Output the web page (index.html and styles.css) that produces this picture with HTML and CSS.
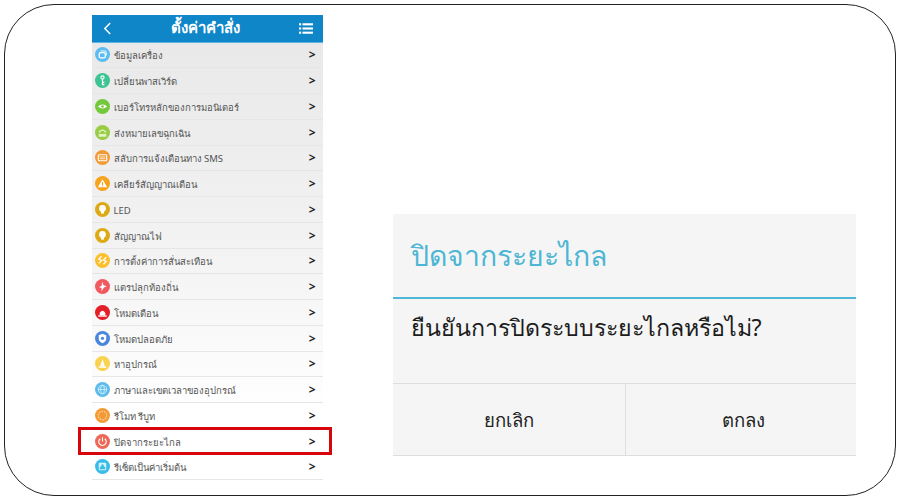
FILE: index.html
```html
<!DOCTYPE html>
<html lang="th">
  <head>
    <meta charset="utf-8" />
    <title>ปิดจากระยะไกล</title>
    <link rel="stylesheet" href="styles.css">
  </head>

  <body>
    <div class="slide">
      <div class="phone">
        <div class="topbar">
          <svg class="back" viewBox="0 0 10 14"><path d="M8 1 L2 7 L8 13" /></svg>
          <span class="topbar-title">ตั้งค่าคำสั่ง</span>
          <svg class="menu" viewBox="0 0 16 12">
            <rect x="0" y="0" width="2.5" height="2.4" /><rect x="4" y="0" width="12" height="2.4" />
            <rect x="0" y="4.8" width="2.5" height="2.4" /><rect x="4" y="4.8" width="12" height="2.4" />
            <rect x="0" y="9.6" width="2.5" height="2.4" /><rect x="4" y="9.6" width="12" height="2.4" />
          </svg>
        </div>

        <ul class="menu-list">
          <li class="row">
            <svg class="icon" viewBox="0 0 16 16"><circle cx="8" cy="8" r="8" fill="#5cbcf2" /><rect x="4.5" y="6" width="6.5" height="5.5" rx="1.5" fill="none" stroke="#fff" stroke-width="1.3" /><path d="M6 4.2 H10.5 Q12 4.2 12 6 V9" fill="none" stroke="#fff" stroke-width="1" /></svg>
            <span class="label">ข้อมูลเครื่อง</span><span class="arrow">&gt;</span>
          </li>
          <li class="row">
            <svg class="icon" viewBox="0 0 16 16"><circle cx="8" cy="8" r="8" fill="#3cc492" /><circle cx="8" cy="4.8" r="1.7" fill="none" stroke="#fff" stroke-width="1.2" /><path d="M8 6.5 V13 M8 10 H10 M8 12.4 H10" stroke="#fff" stroke-width="1.3" fill="none" /></svg>
            <span class="label">เปลี่ยนพาสเวิร์ด</span><span class="arrow">&gt;</span>
          </li>
          <li class="row">
            <svg class="icon" viewBox="0 0 16 16"><circle cx="8" cy="8" r="8" fill="#74c83c" /><path d="M3 8 Q8 3.5 13 8 Q8 12.5 3 8 Z" fill="#fff" /><circle cx="8" cy="8" r="1.4" fill="#74c83c" /></svg>
            <span class="label">เบอร์โทรหลักของการมอนิเตอร์</span><span class="arrow">&gt;</span>
          </li>
          <li class="row">
            <svg class="icon" viewBox="0 0 16 16"><circle cx="8" cy="8" r="8" fill="#98cc44" /><path d="M4 7 Q8 2.5 12 7 V8 H10 V6.5 H6 V8 H4 Z" fill="#e4f3c6" /><rect x="4" y="9.5" width="8" height="3" fill="#e4f3c6" /></svg>
            <span class="label">ส่งหมายเลขฉุกเฉิน</span><span class="arrow">&gt;</span>
          </li>
          <li class="row">
            <svg class="icon" viewBox="0 0 16 16"><circle cx="8" cy="8" r="8" fill="#f49a35" /><rect x="3.5" y="5" width="9" height="6.5" rx="1" fill="none" stroke="#fff" stroke-width="1.2" /><path d="M5 7.5 H11 M5 9.3 H11" stroke="#fff" stroke-width=".8" /></svg>
            <span class="label">สลับการแจ้งเตือนทาง SMS</span><span class="arrow">&gt;</span>
          </li>
          <li class="row">
            <svg class="icon" viewBox="0 0 16 16"><circle cx="8" cy="8" r="8" fill="#f7a31c" /><path d="M8 3.5 L13 12 H3 Z" fill="#fff" /><rect x="7.4" y="6.5" width="1.2" height="3" fill="#f7a31c" /><rect x="7.4" y="10" width="1.2" height="1.1" fill="#f7a31c" /></svg>
            <span class="label">เคลียร์สัญญาณเตือน</span><span class="arrow">&gt;</span>
          </li>
          <li class="row">
            <svg class="icon" viewBox="0 0 16 16"><circle cx="8" cy="8" r="8" fill="#dcaa14" /><circle cx="8" cy="6.8" r="3.6" fill="#fff" /><rect x="6.5" y="9.6" width="3" height="2.8" fill="#fff" /></svg>
            <span class="label">LED</span><span class="arrow">&gt;</span>
          </li>
          <li class="row">
            <svg class="icon" viewBox="0 0 16 16"><circle cx="8" cy="8" r="8" fill="#dcaa14" /><circle cx="8" cy="6.8" r="3.6" fill="#fff" /><rect x="6.5" y="9.6" width="3" height="2.8" fill="#fff" /></svg>
            <span class="label">สัญญาณไฟ</span><span class="arrow">&gt;</span>
          </li>
          <li class="row">
            <svg class="icon" viewBox="0 0 16 16"><circle cx="8" cy="8" r="8" fill="#fbc02d" /><path d="M7 3.5 L4 6.5 L7 8 L4 11 M12 4.5 L9 7.5 L12 9 L9 12" fill="none" stroke="#fff" stroke-width="1.3" /></svg>
            <span class="label">การตั้งค่าการสั่นสะเทือน</span><span class="arrow">&gt;</span>
          </li>
          <li class="row">
            <svg class="icon" viewBox="0 0 16 16"><circle cx="8" cy="8" r="8" fill="#f05a5f" /><path d="M7.5 3 L9 6.5 L12.5 8 L9.5 9 L7 13 L7 9.5 L4 8.5 L7 7.5 Z" fill="#fff" /></svg>
            <span class="label">แตรปลุกท้องถิ่น</span><span class="arrow">&gt;</span>
          </li>
          <li class="row">
            <svg class="icon" viewBox="0 0 16 16"><circle cx="8" cy="8" r="8" fill="#e41e26" /><path d="M5 11 V8.5 Q8 4 11 8.5 V11 Z" fill="#fff" /><rect x="3.5" y="11" width="9" height="1.5" fill="#fff" /></svg>
            <span class="label">โหมดเตือน</span><span class="arrow">&gt;</span>
          </li>
          <li class="row">
            <svg class="icon" viewBox="0 0 16 16"><circle cx="8" cy="8" r="8" fill="#4a86dc" /><path d="M8 3 L12 4.5 V8 Q12 11.5 8 13 Q4 11.5 4 8 V4.5 Z" fill="#fff" /><circle cx="8" cy="7.8" r="1.7" fill="#4a86dc" /></svg>
            <span class="label">โหมดปลอดภัย</span><span class="arrow">&gt;</span>
          </li>
          <li class="row">
            <svg class="icon" viewBox="0 0 16 16"><circle cx="8" cy="8" r="8" fill="#fbd24e" /><path d="M8 3 L10.5 11 H5.5 Z" fill="#fff" /><rect x="4" y="11" width="8" height="1.6" fill="#fff" /></svg>
            <span class="label">หาอุปกรณ์</span><span class="arrow">&gt;</span>
          </li>
          <li class="row">
            <svg class="icon" viewBox="0 0 16 16"><circle cx="8" cy="8" r="8" fill="#5cbcec" /><g fill="none" stroke="#d8f0fb" stroke-width=".9"><circle cx="8" cy="8" r="4.5" /><ellipse cx="8" cy="8" rx="2" ry="4.5" /><path d="M3.5 8 H12.5" /></g></svg>
            <span class="label">ภาษาและเขตเวลาของอุปกรณ์</span><span class="arrow">&gt;</span>
          </li>
          <li class="row">
            <svg class="icon" viewBox="0 0 16 16"><circle cx="8" cy="8" r="8" fill="#f49a35" /><circle cx="8" cy="8" r="4.5" fill="none" stroke="#fbd9ac" stroke-width="1.4" stroke-dasharray="1.4 1.4" /></svg>
            <span class="label">รีโมท รีบูท</span><span class="arrow">&gt;</span>
          </li>
          <li class="row">
            <svg class="icon" viewBox="0 0 16 16"><circle cx="8" cy="8" r="8" fill="#ec6a55" /><path d="M5.6 5 A4 4 0 1 0 10.4 5" fill="none" stroke="#fff" stroke-width="1.2" /><path d="M8 3.5 V8" stroke="#fff" stroke-width="1.2" /></svg>
            <span class="label">ปิดจากระยะไกล</span><span class="arrow">&gt;</span>
            <span class="marker"></span>
          </li>
          <li class="row">
            <svg class="icon" viewBox="0 0 16 16"><circle cx="8" cy="8" r="8" fill="#38bce8" /><rect x="4" y="4" width="8" height="8" rx="1" fill="#d6f2fb" /><path d="M5 11 V9 Q8 5.5 11 9 V11 Z" fill="#38bce8" /><circle cx="8" cy="6.8" r="1.3" fill="#38bce8" /></svg>
            <span class="label">รีเซ็ตเป็นค่าเริ่มต้น</span><span class="arrow">&gt;</span>
          </li>
        </ul>
      </div>

      <div class="dialog">
        <div class="dialog-title">ปิดจากระยะไกล</div>
        <div class="dialog-body">ยืนยันการปิดระบบระยะไกลหรือไม่?</div>
        <div class="dialog-buttons">
          <div class="dialog-btn btn-cancel">ยกเลิก</div>
          <div class="dialog-btn btn-ok">ตกลง</div>
        </div>
      </div>
    </div>
  </body>
</html>
```

FILE: styles.css
```css
body {
  margin: 0;
  width: 900px;
  height: 500px;
  background-color: #fff;
  font-family: "Noto Sans", "Open Sans", sans-serif;
  overflow: hidden;
}
.slide {
  box-sizing: border-box;
  width: 892px;
  height: 492px;
  margin: 4px 0 0 4px;
  border: 1.5px solid #222;
  border-radius: 50px;
  display: flex;
  align-items: flex-start;
  padding: 9.5px 0 0 86.5px;
}
.phone {
  width: 231px;
  flex-shrink: 0;
}
.topbar {
  height: 28px;
  background-color: #0e86c8;
  border-bottom: 1px solid #5bb4e4;
  box-sizing: border-box;
  display: flex;
  align-items: center;
  justify-content: space-between;
  padding: 0 10px 0 11px;
  color: #fff;
}
.back {
  width: 9px;
  height: 13px;
  fill: none;
  stroke: #fff;
  stroke-width: 1.6;
}
.menu {
  width: 14px;
  height: 11px;
  fill: #fff;
}
.topbar-title {
  font-size: 15px;
  font-weight: bold;
}
.menu-list {
  list-style: none;
  margin: 0;
  padding: 0;
  background: linear-gradient(#e9e9e9, #f2f2f2 45%, #fff 85%);
}
.row {
  position: relative;
  box-sizing: border-box;
  height: 25.75px;
  display: flex;
  align-items: center;
  padding: 0 7px 0 3px;
  border-bottom: 1px solid #e6e6e6;
}
.icon {
  width: 15px;
  height: 15px;
  flex-shrink: 0;
}
.label {
  margin-left: 4px;
  padding-top: 2px;
  flex: 1;
  font-size: 9.5px;
  color: #555;
  white-space: nowrap;
}
.arrow {
  font-size: 12px;
  font-weight: bold;
  color: #222;
}
/* red box around the remote shutdown row */
.marker {
  position: absolute;
  left: -14px;
  top: -2px;
  width: 254px;
  height: 28px;
  box-sizing: border-box;
  border: 3px solid #d8060c;
}
.dialog {
  width: 463px;
  height: 242px;
  margin: 199px 0 0 70px;
  background-color: #f5f5f5;
  display: flex;
  flex-direction: column;
}
.dialog-title {
  flex: none;
  box-sizing: border-box;
  height: 85.5px;
  display: flex;
  align-items: center;
  padding: 1px 18px 0;
  font-size: 28.4px;
  color: #4db6d4;
  border-bottom: 2.5px solid #4fb8d6;
}
.dialog-body {
  flex: 1;
  padding: 10px 18px 0;
  font-size: 23.2px;
  color: #1c1c1c;
}
.dialog-buttons {
  height: 71px;
  display: flex;
  border-top: 1px solid #dedede;
  border-bottom: 1px solid #dedede;
}
.dialog-btn {
  display: flex;
  align-items: center;
  justify-content: center;
  padding-top: 2px;
  font-size: 18.5px;
  color: #222;
}
.btn-cancel {
  width: 232px;
}
.btn-ok {
  flex: 1;
  padding-left: 6px;
  border-left: 1px solid #dedede;
}
```
